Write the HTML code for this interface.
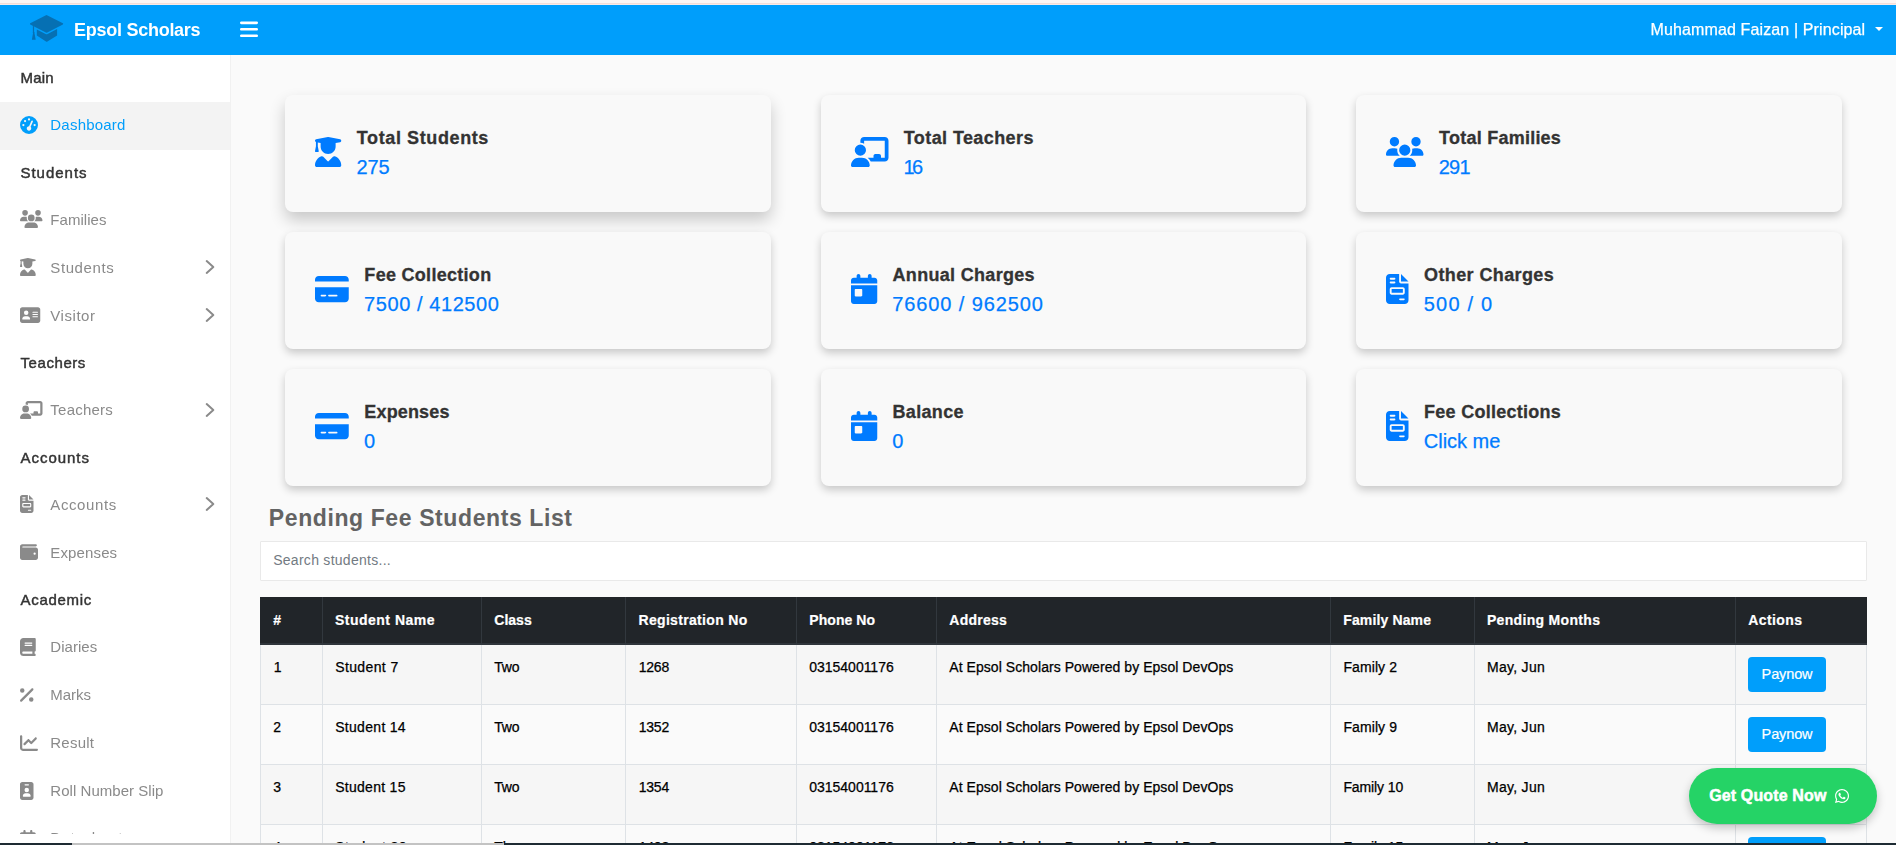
<!DOCTYPE html>
<html lang="en">
<head>
<meta charset="utf-8">
<title>Epsol Scholars - Dashboard</title>
<meta name="viewport" content="width=device-width, initial-scale=1">
<style>
*{box-sizing:border-box;margin:0;padding:0}
html,body{width:1896px;height:845px;overflow:hidden;background:#fafafa}
body{position:relative;font-family:"Liberation Sans",sans-serif;color:#333;-webkit-font-smoothing:antialiased}
.t{position:absolute;white-space:nowrap;display:block}
.i{position:absolute;display:block;overflow:visible}
.abs{position:absolute}
#topstrip{left:0;top:0;width:1896px;height:5px;background:#fdf6f4}
#topstrip i{position:absolute;left:0;width:100%;height:1px}
#header{left:0;top:5px;width:1896px;height:50px;background:#009efb}
#sidebar{left:0;top:55px;width:231px;height:788px;background:#fff;border-right:1px solid #f1f1f1}
#hdrfx{left:0;top:0;width:1896px;height:55px;will-change:transform}
#sideclip{left:0;top:55px;width:230px;height:779px;overflow:hidden;will-change:transform}
#sideclip .in{position:absolute;left:0;top:-55px;width:230px;height:900px}
.active{left:0;top:101.5px;width:230px;height:48px;background:#f3f3f3}
.card{border-radius:8px;background:#f9f9f9;box-shadow:0 4px 8px 0 rgba(0,0,0,.2);width:485.5px;height:117px}
.card.hover{box-shadow:0 8px 16px 0 rgba(0,0,0,.2)}
#search{left:260px;top:541px;width:1607px;height:40px;background:#fff;border:1px solid #e9e9e9;border-radius:1px}
#tbl{left:260px;top:597px;width:1607px;height:260px}
#thead{left:0;top:0;width:100%;height:48px;background:#212529;border-bottom:2px solid #2f353b}
.row{left:0;width:100%;height:60px;border-bottom:1px solid #dee2e6}
.row.odd{background:#f6f6f6}
.vl{top:48px;width:1px;background:#dee2e6;height:212px}
.vlh{top:0;width:1px;background:#32383e;height:48px}
.btn{width:78px;height:35px;background:#009efb;border-radius:4px}
#quote{left:1689px;top:768px;width:188px;height:56px;border-radius:28px;background:#25d366;box-shadow:0 4px 10px rgba(0,0,0,.22)}
#bottom{left:0;top:843px;width:1896px;height:2px;background:#c3c3c3}
#bottom i{position:absolute;top:0;height:2px;background:#1e2b33}
</style>
</head>
<body>

<div id="topstrip" class="abs"><i style="top:3px;background:#f5ddd7"></i><i style="top:4px;background:#f7ebe9"></i></div>
<header id="header" class="abs"></header>
<div id="hdrfx" class="abs">
<svg class="i" style="left:24px;top:8px" width="48" height="40" viewBox="24 8 48 40" aria-hidden="true"><g fill="#0670b3"><path d="M46.5 15 L62.9 23.3 Q63.5 23.9 62.9 24.4 L47.3 32.5 Q46.6 32.8 45.9 32.5 L30.2 24.4 Q29.6 23.9 30.2 23.3 Z"/><path d="M36.8 29.4 L45.6 34 Q46.6 34.5 47.6 34 L57.1 29.1 L57.1 35.6 L47.4 41.6 Q46.7 42 46 41.6 L36.8 35.6 Z"/><path d="M32.9 25.8 L34.1 26.4 L34.1 31.8 Q34.8 32.3 34.5 33.2 L35.7 39.7 L31.9 39.7 L33 33.2 Q32.5 32.3 32.9 31.8 Z"/></g></svg>
<span class="t " style="left:74.10px;top:18px;font-size:18px;line-height:24px;letter-spacing:-0.273px;color:#fff;font-weight:700;">Epsol Scholars</span>
<svg class="i" style="left:239.60px;top:19.30px;" width="18.025" height="20.6" viewBox="0 0 448 512" aria-hidden="true"><path fill="#fff" d="M0 96C0 78.3 14.3 64 32 64H416c17.700 0 32 14.300 32 32s-14.300 32-32 32H32C14.300 128 0 113.700 0 96zM0 256c0-17.700 14.300-32 32-32H416c17.700 0 32 14.300 32 32s-14.300 32-32 32H32c-17.700 0-32-14.300-32-32zM448 416c0 17.700-14.300 32-32 32H32c-17.700 0-32-14.300-32-32s14.300-32 32-32H416c17.700 0 32 14.300 32 32z"/></svg>
<span class="t " style="left:1650.50px;top:19px;font-size:16px;line-height:21px;letter-spacing:0.128px;color:#fff;-webkit-text-stroke:0.25px #fff;">Muhammad Faizan | Principal</span>
<div class="abs" style="left:1874.5px;top:27.3px;width:0;height:0;border-left:4px solid transparent;border-right:4px solid transparent;border-top:4px solid #fff"></div>
</div>
<aside id="sidebar" class="abs"></aside>
<nav id="sideclip" class="abs"><div class="in">
<div class="abs active"></div>
<span class="t " style="left:20.50px;top:67px;font-size:15px;line-height:21px;letter-spacing:0.217px;color:#333;-webkit-text-stroke:0.45px #333;">Main</span>
<svg class="i" style="left:20.00px;top:116.00px;" width="18.000" height="18" viewBox="0 0 512 512" aria-hidden="true"><path fill="#009efb" d="M0 256a256 256 0 1 1 512 0A256 256 0 1 1 0 256zM288 96a32 32 0 1 0 -64 0 32 32 0 1 0 64 0zM256 416c35.300 0 64-28.700 64-64c0-17.400-6.900-33.100-18.100-44.600L366 161.700c5.300-12.100-.2-26.300-12.300-31.600s-26.300 .2-31.600 12.300L257.900 288c-.6 0-1.300 0-1.900 0c-35.300 0-64 28.700-64 64s28.700 64 64 64zM176 144a32 32 0 1 0 -64 0 32 32 0 1 0 64 0zM96 288a32 32 0 1 0 0-64 32 32 0 1 0 0 64zm352-32a32 32 0 1 0 -64 0 32 32 0 1 0 64 0z"/></svg>
<span class="t " style="left:50.30px;top:114px;font-size:15px;line-height:21px;letter-spacing:0.219px;color:#009efb;">Dashboard</span>
<span class="t " style="left:20.50px;top:162px;font-size:15px;line-height:21px;letter-spacing:0.975px;color:#333;-webkit-text-stroke:0.45px #333;">Students</span>
<svg class="i" style="left:20.00px;top:210.00px;" width="22.500" height="18" viewBox="0 0 640 512" aria-hidden="true"><path fill="#8a8a8a" d="M144 0a80 80 0 1 1 0 160A80 80 0 1 1 144 0zM512 0a80 80 0 1 1 0 160A80 80 0 1 1 512 0zM0 298.700C0 239.800 47.800 192 106.700 192h42.700c15.900 0 31 3.500 44.600 9.700c-1.300 7.200-1.900 14.700-1.900 22.300c0 38.200 16.800 72.500 43.300 96c-.2 0-.4 0-.7 0H21.300C9.600 320 0 310.400 0 298.700zM405.300 320c-.2 0-.4 0-.7 0c26.600-23.500 43.300-57.800 43.300-96c0-7.600-.7-15-1.900-22.300c13.600-6.300 28.700-9.700 44.600-9.700h42.700C592.200 192 640 239.800 640 298.700c0 11.800-9.600 21.300-21.300 21.300H405.300zM224 224a96 96 0 1 1 192 0 96 96 0 1 1 -192 0zM128 485.300C128 411.700 187.700 352 261.300 352H378.700C452.300 352 512 411.700 512 485.300c0 14.700-11.900 26.700-26.700 26.700H154.700c-14.700 0-26.700-11.900-26.700-26.700z"/></svg>
<span class="t " style="left:50.30px;top:209px;font-size:15px;line-height:21px;letter-spacing:0.046px;color:#8a8a8a;">Families</span>
<svg class="i" style="left:20.00px;top:258.00px;" width="15.750" height="18" viewBox="0 0 448 512" aria-hidden="true"><path fill="#8a8a8a" d="M219.300 .5c3.100-.6 6.300-.6 9.400 0l200 40C439.900 42.700 448 52.600 448 64s-8.100 21.300-19.300 23.500L352 102.900V160c0 70.700-57.300 128-128 128s-128-57.300-128-128V102.900L48 93.300v65.100l15.700 78.400c.9 4.700-.3 9.600-3.300 13.300s-7.600 5.900-12.400 5.900H16c-4.800 0-9.300-2.100-12.400-5.900s-4.300-8.600-3.300-13.300L16 158.400V86.600C6.500 83.300 0 74.300 0 64C0 52.600 8.100 42.700 19.300 40.500l200-40zM111.900 327.700c10.500-3.400 21.800 .4 29.400 8.500l71 75.500c6.300 6.700 17 6.700 23.300 0l71-75.500c7.600-8.100 18.900-11.900 29.400-8.500C401 348.600 448 409.400 448 481.300c0 17-13.800 30.700-30.700 30.700H30.700C13.800 512 0 498.200 0 481.300c0-71.900 47-132.700 111.900-153.600z"/></svg>
<span class="t " style="left:50.30px;top:257px;font-size:15px;line-height:21px;letter-spacing:0.604px;color:#8a8a8a;">Students</span>
<svg class="i" style="left:203px;top:257.30px" width="14" height="20" viewBox="0 0 14 20" aria-hidden="true"><path d="M3.7 4.1 L10.3 10 L3.7 15.9" fill="none" stroke="#8a8a8a" stroke-width="2" stroke-linecap="round" stroke-linejoin="round"/></svg>
<svg class="i" style="left:20.00px;top:306.00px;" width="20.250" height="18" viewBox="0 0 576 512" aria-hidden="true"><path fill="#8a8a8a" d="M64 32C28.700 32 0 60.700 0 96V416c0 35.300 28.700 64 64 64H512c35.300 0 64-28.700 64-64V96c0-35.300-28.700-64-64-64H64zm80 256h64c44.200 0 80 35.800 80 80c0 8.800-7.200 16-16 16H80c-8.800 0-16-7.200-16-16c0-44.200 35.800-80 80-80zm-32-96a64 64 0 1 1 128 0 64 64 0 1 1 -128 0zm256-32H496c8.800 0 16 7.200 16 16s-7.200 16-16 16H368c-8.800 0-16-7.200-16-16s7.200-16 16-16zm0 64H496c8.800 0 16 7.200 16 16s-7.200 16-16 16H368c-8.800 0-16-7.200-16-16s7.200-16 16-16zm0 64H496c8.800 0 16 7.200 16 16s-7.200 16-16 16H368c-8.800 0-16-7.200-16-16s7.200-16 16-16z"/></svg>
<span class="t " style="left:50.30px;top:305px;font-size:15px;line-height:21px;letter-spacing:0.550px;color:#8a8a8a;">Visitor</span>
<svg class="i" style="left:203px;top:305.30px" width="14" height="20" viewBox="0 0 14 20" aria-hidden="true"><path d="M3.7 4.1 L10.3 10 L3.7 15.9" fill="none" stroke="#8a8a8a" stroke-width="2" stroke-linecap="round" stroke-linejoin="round"/></svg>
<span class="t " style="left:20.50px;top:352px;font-size:15px;line-height:21px;letter-spacing:0.571px;color:#333;-webkit-text-stroke:0.45px #333;">Teachers</span>
<svg class="i" style="left:20.00px;top:401.00px;" width="22.500" height="18" viewBox="0 0 640 512" aria-hidden="true"><path fill="#8a8a8a" d="M160 64c0-35.300 28.700-64 64-64H576c35.300 0 64 28.700 64 64V352c0 35.300-28.700 64-64 64H336.800c-11.800-25.500-29.900-47.500-52.400-64H384V320c0-17.700 14.300-32 32-32h64c17.700 0 32 14.300 32 32v32h64V64L224 64v49.100C205.200 102.200 183.300 96 160 96V64zm0 64a96 96 0 1 1 0 192 96 96 0 1 1 0-192zM133.300 352h53.300C260.300 352 320 411.700 320 485.300c0 14.700-11.900 26.700-26.700 26.700H26.700C11.900 512 0 500.100 0 485.300C0 411.700 59.700 352 133.300 352z"/></svg>
<span class="t " style="left:50.30px;top:399px;font-size:15px;line-height:21px;letter-spacing:0.243px;color:#8a8a8a;">Teachers</span>
<svg class="i" style="left:203px;top:399.80px" width="14" height="20" viewBox="0 0 14 20" aria-hidden="true"><path d="M3.7 4.1 L10.3 10 L3.7 15.9" fill="none" stroke="#8a8a8a" stroke-width="2" stroke-linecap="round" stroke-linejoin="round"/></svg>
<span class="t " style="left:20.50px;top:447px;font-size:15px;line-height:21px;letter-spacing:0.968px;color:#333;-webkit-text-stroke:0.45px #333;">Accounts</span>
<svg class="i" style="left:20.00px;top:495.00px;" width="13.500" height="18" viewBox="0 0 384 512" aria-hidden="true"><path fill="#8a8a8a" d="M64 0C28.700 0 0 28.700 0 64V448c0 35.300 28.700 64 64 64H320c35.300 0 64-28.700 64-64V160H256c-17.700 0-32-14.300-32-32V0H64zM256 0V128H384L256 0zM80 64h64c8.800 0 16 7.200 16 16s-7.200 16-16 16H80c-8.800 0-16-7.200-16-16s7.200-16 16-16zm0 64h64c8.800 0 16 7.200 16 16s-7.200 16-16 16H80c-8.800 0-16-7.200-16-16s7.200-16 16-16zm16 96H288c17.700 0 32 14.300 32 32v64c0 17.700-14.300 32-32 32H96c-17.700 0-32-14.300-32-32V256c0-17.700 14.300-32 32-32zm0 32v64H288V256H96zM240 416h64c8.800 0 16 7.200 16 16s-7.200 16-16 16H240c-8.800 0-16-7.200-16-16s7.200-16 16-16z"/></svg>
<span class="t " style="left:50.30px;top:494px;font-size:15px;line-height:21px;letter-spacing:0.596px;color:#8a8a8a;">Accounts</span>
<svg class="i" style="left:203px;top:494.30px" width="14" height="20" viewBox="0 0 14 20" aria-hidden="true"><path d="M3.7 4.1 L10.3 10 L3.7 15.9" fill="none" stroke="#8a8a8a" stroke-width="2" stroke-linecap="round" stroke-linejoin="round"/></svg>
<svg class="i" style="left:20.00px;top:543.00px;" width="18.000" height="18" viewBox="0 0 512 512" aria-hidden="true"><path fill="#8a8a8a" d="M64 32C28.700 32 0 60.700 0 96V416c0 35.300 28.700 64 64 64H448c35.300 0 64-28.700 64-64V192c0-35.300-28.700-64-64-64H80c-8.800 0-16-7.200-16-16s7.200-16 16-16H448c17.700 0 32-14.300 32-32s-14.300-32-32-32H64zM416 272a32 32 0 1 1 0 64 32 32 0 1 1 0-64z"/></svg>
<span class="t " style="left:50.30px;top:542px;font-size:15px;line-height:21px;letter-spacing:0.136px;color:#8a8a8a;">Expenses</span>
<span class="t " style="left:20.50px;top:589px;font-size:15px;line-height:21px;letter-spacing:0.693px;color:#333;-webkit-text-stroke:0.45px #333;">Academic</span>
<svg class="i" style="left:20.00px;top:638.00px;" width="15.750" height="18" viewBox="0 0 448 512" aria-hidden="true"><path fill="#8a8a8a" d="M96 0C43 0 0 43 0 96V416c0 53 43 96 96 96H384h32c17.700 0 32-14.300 32-32s-14.300-32-32-32V384c17.700 0 32-14.300 32-32V32c0-17.700-14.300-32-32-32H384 96zm0 384H352v64H96c-17.700 0-32-14.300-32-32s14.300-32 32-32zm32-240c0-8.800 7.200-16 16-16H336c8.800 0 16 7.200 16 16s-7.200 16-16 16H144c-8.800 0-16-7.200-16-16zm16 48H336c8.800 0 16 7.200 16 16s-7.200 16-16 16H144c-8.800 0-16-7.200-16-16s7.200-16 16-16z"/></svg>
<span class="t " style="left:50.30px;top:636px;font-size:15px;line-height:21px;letter-spacing:0.042px;color:#8a8a8a;">Diaries</span>
<svg class="i" style="left:20.00px;top:686.00px;" width="13.500" height="18" viewBox="0 0 384 512" aria-hidden="true"><path fill="#8a8a8a" d="M374.600 118.600c12.500-12.500 12.500-32.800 0-45.300s-32.800-12.500-45.300 0l-320 320c-12.500 12.500-12.500 32.800 0 45.300s32.800 12.500 45.300 0l320-320zM128 128A64 64 0 1 0 0 128a64 64 0 1 0 128 0zM384 384a64 64 0 1 0 -128 0 64 64 0 1 0 128 0z"/></svg>
<span class="t " style="left:50.30px;top:684px;font-size:15px;line-height:21px;letter-spacing:-0.050px;color:#8a8a8a;">Marks</span>
<svg class="i" style="left:20.00px;top:734.00px;" width="18.000" height="18" viewBox="0 0 512 512" aria-hidden="true"><path fill="#8a8a8a" d="M64 64c0-17.700-14.300-32-32-32S0 46.300 0 64V400c0 44.200 35.800 80 80 80H480c17.700 0 32-14.300 32-32s-14.300-32-32-32H80c-8.800 0-16-7.200-16-16V64zm406.600 86.600c12.500-12.500 12.500-32.800 0-45.300s-32.800-12.500-45.300 0L320 210.700l-57.400-57.400c-12.500-12.500-32.800-12.500-45.300 0l-112 112c-12.500 12.500-12.500 32.800 0 45.300s32.800 12.500 45.300 0L240 221.300l57.400 57.400c12.500 12.500 32.800 12.500 45.300 0l128-128z"/></svg>
<span class="t " style="left:50.30px;top:732px;font-size:15px;line-height:21px;letter-spacing:0.235px;color:#8a8a8a;">Result</span>
<svg class="i" style="left:20.00px;top:782.00px;" width="13.500" height="18" viewBox="0 0 384 512" aria-hidden="true"><path fill="#8a8a8a" d="M64 0C28.700 0 0 28.700 0 64V448c0 35.300 28.700 64 64 64H320c35.300 0 64-28.700 64-64V64c0-35.300-28.700-64-64-64H64zm96 320h64c44.200 0 80 35.800 80 80c0 8.800-7.200 16-16 16H96c-8.800 0-16-7.200-16-16c0-44.200 35.800-80 80-80zm-32-96a64 64 0 1 1 128 0 64 64 0 1 1 -128 0zM144 64h96c8.800 0 16 7.200 16 16s-7.200 16-16 16H144c-8.800 0-16-7.200-16-16s7.200-16 16-16z"/></svg>
<span class="t " style="left:50.30px;top:780px;font-size:15px;line-height:21px;letter-spacing:0.042px;color:#8a8a8a;">Roll Number Slip</span>
<svg class="i" style="left:20.00px;top:830.00px;" width="15.750" height="18" viewBox="0 0 448 512" aria-hidden="true"><path fill="#8a8a8a" d="M128 0c17.700 0 32 14.300 32 32V64H288V32c0-17.700 14.300-32 32-32s32 14.300 32 32V64h48c26.500 0 48 21.500 48 48v48H0V112C0 85.500 21.500 64 48 64H96V32c0-17.700 14.300-32 32-32zM0 192H448V464c0 26.500-21.500 48-48 48H48c-26.500 0-48-21.500-48-48V192zm64 80v32c0 8.800 7.200 16 16 16h32c8.800 0 16-7.200 16-16V272c0-8.800-7.200-16-16-16H80c-8.800 0-16 7.200-16 16zm128 0v32c0 8.800 7.200 16 16 16h32c8.800 0 16-7.200 16-16V272c0-8.800-7.200-16-16-16H208c-8.800 0-16 7.200-16 16zm144-16c-8.800 0-16 7.200-16 16v32c0 8.800 7.200 16 16 16h32c8.800 0 16-7.200 16-16V272c0-8.800-7.200-16-16-16H336z"/></svg>
<span class="t " style="left:50.30px;top:827px;font-size:15px;line-height:21px;letter-spacing:0.475px;color:#8a8a8a;">Datesheet</span>
</div></nav>
<main>
<section class="abs card hover" style="left:285.00px;top:95px"></section>
<svg class="i" style="left:315.00px;top:136.80px;" width="26.250" height="30" viewBox="0 0 448 512" aria-hidden="true"><path fill="#007bff" d="M219.300 .5c3.100-.6 6.300-.6 9.400 0l200 40C439.900 42.700 448 52.600 448 64s-8.100 21.300-19.300 23.500L352 102.900V160c0 70.700-57.300 128-128 128s-128-57.300-128-128V102.900L48 93.300v65.100l15.700 78.400c.9 4.700-.3 9.600-3.300 13.300s-7.600 5.900-12.400 5.900H16c-4.800 0-9.300-2.100-12.400-5.900s-4.300-8.600-3.300-13.300L16 158.400V86.600C6.500 83.300 0 74.300 0 64C0 52.600 8.100 42.700 19.300 40.500l200-40zM111.900 327.700c10.500-3.400 21.800 .4 29.400 8.500l71 75.500c6.300 6.700 17 6.700 23.300 0l71-75.500c7.600-8.100 18.900-11.900 29.400-8.500C401 348.600 448 409.400 448 481.300c0 17-13.800 30.700-30.700 30.700H30.700C13.800 512 0 498.200 0 481.300c0-71.900 47-132.700 111.900-153.600z"/></svg>
<span class="t " style="left:356.85px;top:126px;font-size:18px;line-height:24px;letter-spacing:0.603px;color:#333;font-weight:700;-webkit-text-stroke:0.3px #333;">Total Students</span>
<span class="t " style="left:356.55px;top:154px;font-size:20px;line-height:26px;letter-spacing:-0.200px;color:#007bff;-webkit-text-stroke:0.25px #007bff;">275</span>
<section class="abs card" style="left:820.67px;top:95px"></section>
<svg class="i" style="left:850.67px;top:136.80px;" width="37.500" height="30" viewBox="0 0 640 512" aria-hidden="true"><path fill="#007bff" d="M160 64c0-35.300 28.700-64 64-64H576c35.300 0 64 28.700 64 64V352c0 35.300-28.700 64-64 64H336.800c-11.800-25.500-29.900-47.500-52.400-64H384V320c0-17.700 14.300-32 32-32h64c17.700 0 32 14.300 32 32v32h64V64L224 64v49.100C205.200 102.200 183.300 96 160 96V64zm0 64a96 96 0 1 1 0 192 96 96 0 1 1 0-192zM133.300 352h53.300C260.300 352 320 411.700 320 485.300c0 14.700-11.900 26.700-26.700 26.700H26.700C11.900 512 0 500.100 0 485.300C0 411.700 59.700 352 133.300 352z"/></svg>
<span class="t " style="left:903.77px;top:126px;font-size:18px;line-height:24px;letter-spacing:0.409px;color:#333;font-weight:700;-webkit-text-stroke:0.3px #333;">Total Teachers</span>
<span class="t " style="left:903.47px;top:154px;font-size:20px;line-height:26px;letter-spacing:-2.700px;color:#007bff;-webkit-text-stroke:0.25px #007bff;">16</span>
<section class="abs card" style="left:1356.00px;top:95px"></section>
<svg class="i" style="left:1386.00px;top:136.80px;" width="37.500" height="30" viewBox="0 0 640 512" aria-hidden="true"><path fill="#007bff" d="M144 0a80 80 0 1 1 0 160A80 80 0 1 1 144 0zM512 0a80 80 0 1 1 0 160A80 80 0 1 1 512 0zM0 298.700C0 239.800 47.800 192 106.700 192h42.700c15.900 0 31 3.500 44.600 9.700c-1.300 7.200-1.900 14.700-1.900 22.300c0 38.200 16.800 72.500 43.300 96c-.2 0-.4 0-.7 0H21.300C9.600 320 0 310.400 0 298.700zM405.300 320c-.2 0-.4 0-.7 0c26.600-23.500 43.300-57.800 43.300-96c0-7.600-.7-15-1.900-22.300c13.600-6.300 28.700-9.700 44.600-9.700h42.700C592.200 192 640 239.800 640 298.700c0 11.800-9.600 21.300-21.300 21.300H405.300zM224 224a96 96 0 1 1 192 0 96 96 0 1 1 -192 0zM128 485.300C128 411.700 187.700 352 261.300 352H378.700C452.300 352 512 411.700 512 485.300c0 14.700-11.900 26.700-26.700 26.700H154.700c-14.700 0-26.700-11.900-26.700-26.700z"/></svg>
<span class="t " style="left:1439.10px;top:126px;font-size:18px;line-height:24px;letter-spacing:0.238px;color:#333;font-weight:700;-webkit-text-stroke:0.3px #333;">Total Families</span>
<span class="t " style="left:1438.80px;top:154px;font-size:20px;line-height:26px;letter-spacing:-0.800px;color:#007bff;-webkit-text-stroke:0.25px #007bff;">291</span>
<section class="abs card" style="left:285.00px;top:232px"></section>
<svg class="i" style="left:315.00px;top:273.80px;" width="33.750" height="30" viewBox="0 0 576 512" aria-hidden="true"><path fill="#007bff" d="M64 32C28.700 32 0 60.700 0 96v32H576V96c0-35.300-28.700-64-64-64H64zM576 224H0V416c0 35.300 28.700 64 64 64H512c35.300 0 64-28.700 64-64V224zM112 352h64c8.800 0 16 7.200 16 16s-7.200 16-16 16H112c-8.800 0-16-7.200-16-16s7.200-16 16-16zm112 16c0-8.800 7.200-16 16-16H368c8.800 0 16 7.200 16 16s-7.200 16-16 16H240c-8.800 0-16-7.200-16-16z"/></svg>
<span class="t " style="left:364.35px;top:263px;font-size:18px;line-height:24px;letter-spacing:0.290px;color:#333;font-weight:700;-webkit-text-stroke:0.3px #333;">Fee Collection</span>
<span class="t " style="left:364.05px;top:291px;font-size:20px;line-height:26px;letter-spacing:0.575px;color:#007bff;-webkit-text-stroke:0.25px #007bff;">7500 / 412500</span>
<section class="abs card" style="left:820.67px;top:232px"></section>
<svg class="i" style="left:850.67px;top:273.80px;" width="26.250" height="30" viewBox="0 0 448 512" aria-hidden="true"><path fill="#007bff" d="M128 0c17.700 0 32 14.300 32 32V64H288V32c0-17.700 14.300-32 32-32s32 14.300 32 32V64h48c26.500 0 48 21.500 48 48v48H0V112C0 85.500 21.500 64 48 64H96V32c0-17.700 14.300-32 32-32zM0 192H448V464c0 26.500-21.500 48-48 48H48c-26.500 0-48-21.500-48-48V192zm80 64c-8.800 0-16 7.200-16 16v96c0 8.800 7.200 16 16 16h96c8.800 0 16-7.200 16-16V272c0-8.800-7.200-16-16-16H80z"/></svg>
<span class="t " style="left:892.52px;top:263px;font-size:18px;line-height:24px;letter-spacing:0.311px;color:#333;font-weight:700;-webkit-text-stroke:0.3px #333;">Annual Charges</span>
<span class="t " style="left:892.22px;top:291px;font-size:20px;line-height:26px;letter-spacing:0.900px;color:#007bff;-webkit-text-stroke:0.25px #007bff;">76600 / 962500</span>
<section class="abs card" style="left:1356.00px;top:232px"></section>
<svg class="i" style="left:1386.00px;top:273.80px;" width="22.500" height="30" viewBox="0 0 384 512" aria-hidden="true"><path fill="#007bff" d="M64 0C28.700 0 0 28.700 0 64V448c0 35.300 28.700 64 64 64H320c35.300 0 64-28.700 64-64V160H256c-17.700 0-32-14.300-32-32V0H64zM256 0V128H384L256 0zM80 64h64c8.800 0 16 7.200 16 16s-7.200 16-16 16H80c-8.800 0-16-7.200-16-16s7.200-16 16-16zm0 64h64c8.800 0 16 7.200 16 16s-7.200 16-16 16H80c-8.800 0-16-7.200-16-16s7.200-16 16-16zm16 96H288c17.700 0 32 14.300 32 32v64c0 17.700-14.300 32-32 32H96c-17.700 0-32-14.300-32-32V256c0-17.700 14.300-32 32-32zm0 32v64H288V256H96zM240 416h64c8.800 0 16 7.200 16 16s-7.200 16-16 16H240c-8.800 0-16-7.200-16-16s7.200-16 16-16z"/></svg>
<span class="t " style="left:1424.10px;top:263px;font-size:18px;line-height:24px;letter-spacing:0.382px;color:#333;font-weight:700;-webkit-text-stroke:0.3px #333;">Other Charges</span>
<span class="t " style="left:1423.80px;top:291px;font-size:20px;line-height:26px;letter-spacing:1.200px;color:#007bff;-webkit-text-stroke:0.25px #007bff;">500 / 0</span>
<section class="abs card" style="left:285.00px;top:369px"></section>
<svg class="i" style="left:315.00px;top:410.80px;" width="33.750" height="30" viewBox="0 0 576 512" aria-hidden="true"><path fill="#007bff" d="M64 32C28.700 32 0 60.700 0 96v32H576V96c0-35.300-28.700-64-64-64H64zM576 224H0V416c0 35.300 28.700 64 64 64H512c35.300 0 64-28.700 64-64V224zM112 352h64c8.800 0 16 7.200 16 16s-7.200 16-16 16H112c-8.800 0-16-7.200-16-16s7.200-16 16-16zm112 16c0-8.800 7.200-16 16-16H368c8.800 0 16 7.200 16 16s-7.200 16-16 16H240c-8.800 0-16-7.200-16-16z"/></svg>
<span class="t " style="left:364.35px;top:400px;font-size:18px;line-height:24px;letter-spacing:0.149px;color:#333;font-weight:700;-webkit-text-stroke:0.3px #333;">Expenses</span>
<span class="t " style="left:364.05px;top:428px;font-size:20px;line-height:26px;letter-spacing:0.000px;color:#007bff;-webkit-text-stroke:0.25px #007bff;">0</span>
<section class="abs card" style="left:820.67px;top:369px"></section>
<svg class="i" style="left:850.67px;top:410.80px;" width="26.250" height="30" viewBox="0 0 448 512" aria-hidden="true"><path fill="#007bff" d="M128 0c17.700 0 32 14.300 32 32V64H288V32c0-17.700 14.300-32 32-32s32 14.300 32 32V64h48c26.500 0 48 21.500 48 48v48H0V112C0 85.500 21.500 64 48 64H96V32c0-17.700 14.300-32 32-32zM0 192H448V464c0 26.500-21.500 48-48 48H48c-26.500 0-48-21.500-48-48V192zm80 64c-8.800 0-16 7.200-16 16v96c0 8.800 7.200 16 16 16h96c8.800 0 16-7.200 16-16V272c0-8.800-7.200-16-16-16H80z"/></svg>
<span class="t " style="left:892.52px;top:400px;font-size:18px;line-height:24px;letter-spacing:0.328px;color:#333;font-weight:700;-webkit-text-stroke:0.3px #333;">Balance</span>
<span class="t " style="left:892.22px;top:428px;font-size:20px;line-height:26px;letter-spacing:0.000px;color:#007bff;-webkit-text-stroke:0.25px #007bff;">0</span>
<section class="abs card" style="left:1356.00px;top:369px"></section>
<svg class="i" style="left:1386.00px;top:410.80px;" width="22.500" height="30" viewBox="0 0 384 512" aria-hidden="true"><path fill="#007bff" d="M64 0C28.700 0 0 28.700 0 64V448c0 35.300 28.700 64 64 64H320c35.300 0 64-28.700 64-64V160H256c-17.700 0-32-14.300-32-32V0H64zM256 0V128H384L256 0zM80 64h64c8.800 0 16 7.200 16 16s-7.200 16-16 16H80c-8.800 0-16-7.200-16-16s7.200-16 16-16zm0 64h64c8.800 0 16 7.200 16 16s-7.200 16-16 16H80c-8.800 0-16-7.200-16-16s7.200-16 16-16zm16 96H288c17.700 0 32 14.300 32 32v64c0 17.700-14.300 32-32 32H96c-17.700 0-32-14.300-32-32V256c0-17.700 14.300-32 32-32zm0 32v64H288V256H96zM240 416h64c8.800 0 16 7.200 16 16s-7.200 16-16 16H240c-8.800 0-16-7.200-16-16s7.200-16 16-16z"/></svg>
<span class="t " style="left:1424.10px;top:400px;font-size:18px;line-height:24px;letter-spacing:0.256px;color:#333;font-weight:700;-webkit-text-stroke:0.3px #333;">Fee Collections</span>
<span class="t " style="left:1423.80px;top:428px;font-size:20px;line-height:26px;letter-spacing:-0.029px;color:#007bff;-webkit-text-stroke:0.25px #007bff;">Click me</span>
<span class="t " style="left:268.80px;top:503px;font-size:23px;line-height:30px;letter-spacing:0.601px;color:#636363;font-weight:700;">Pending Fee Students List</span>
<div id="search" class="abs"></div>
<span class="t " style="left:273.20px;top:550px;font-size:14px;line-height:20px;letter-spacing:0.274px;color:#727a82;">Search students...</span>
<div id="tbl" class="abs">
<div id="thead" class="abs"></div>
<div class="abs row odd" style="top:48px"></div>
<div class="abs row " style="top:108px"></div>
<div class="abs row odd" style="top:168px"></div>
<div class="abs row " style="top:228px"></div>
<div class="abs vl" style="left:0.0px"></div>
<div class="abs vl" style="left:62.0px"></div>
<div class="abs vl" style="left:221.0px"></div>
<div class="abs vl" style="left:365.0px"></div>
<div class="abs vl" style="left:536.0px"></div>
<div class="abs vl" style="left:676.0px"></div>
<div class="abs vl" style="left:1070.0px"></div>
<div class="abs vl" style="left:1214.0px"></div>
<div class="abs vl" style="left:1475.0px"></div>
<div class="abs vl" style="left:1606.0px"></div>
<div class="abs vlh" style="left:62.0px"></div>
<div class="abs vlh" style="left:221.0px"></div>
<div class="abs vlh" style="left:365.0px"></div>
<div class="abs vlh" style="left:536.0px"></div>
<div class="abs vlh" style="left:676.0px"></div>
<div class="abs vlh" style="left:1070.0px"></div>
<div class="abs vlh" style="left:1214.0px"></div>
<div class="abs vlh" style="left:1475.0px"></div>
</div>
<span class="t " style="left:273.30px;top:610px;font-size:14px;line-height:20px;letter-spacing:0.000px;color:#fff;font-weight:700;-webkit-text-stroke:0.2px #fff;">#</span>
<span class="t " style="left:335.00px;top:610px;font-size:14px;line-height:20px;letter-spacing:0.486px;color:#fff;font-weight:700;-webkit-text-stroke:0.2px #fff;">Student Name</span>
<span class="t " style="left:494.30px;top:610px;font-size:14px;line-height:20px;letter-spacing:0.005px;color:#fff;font-weight:700;-webkit-text-stroke:0.2px #fff;">Class</span>
<span class="t " style="left:638.50px;top:610px;font-size:14px;line-height:20px;letter-spacing:0.319px;color:#fff;font-weight:700;-webkit-text-stroke:0.2px #fff;">Registration No</span>
<span class="t " style="left:809.30px;top:610px;font-size:14px;line-height:20px;letter-spacing:0.056px;color:#fff;font-weight:700;-webkit-text-stroke:0.2px #fff;">Phone No</span>
<span class="t " style="left:949.30px;top:610px;font-size:14px;line-height:20px;letter-spacing:0.233px;color:#fff;font-weight:700;-webkit-text-stroke:0.2px #fff;">Address</span>
<span class="t " style="left:1343.20px;top:610px;font-size:14px;line-height:20px;letter-spacing:0.142px;color:#fff;font-weight:700;-webkit-text-stroke:0.2px #fff;">Family Name</span>
<span class="t " style="left:1486.90px;top:610px;font-size:14px;line-height:20px;letter-spacing:0.327px;color:#fff;font-weight:700;-webkit-text-stroke:0.2px #fff;">Pending Months</span>
<span class="t " style="left:1748.20px;top:610px;font-size:14px;line-height:20px;letter-spacing:0.415px;color:#fff;font-weight:700;-webkit-text-stroke:0.2px #fff;">Actions</span>
<span class="t " style="left:273.80px;top:657px;font-size:14px;line-height:20px;letter-spacing:0.000px;color:#000;-webkit-text-stroke:0.25px #000;">1</span>
<span class="t " style="left:335.20px;top:657px;font-size:14px;line-height:20px;letter-spacing:0.385px;color:#000;-webkit-text-stroke:0.25px #000;">Student 7</span>
<span class="t " style="left:494.30px;top:657px;font-size:14px;line-height:20px;letter-spacing:-0.245px;color:#000;-webkit-text-stroke:0.25px #000;">Two</span>
<span class="t " style="left:638.80px;top:657px;font-size:14px;line-height:20px;letter-spacing:-0.250px;color:#000;-webkit-text-stroke:0.25px #000;">1268</span>
<span class="t " style="left:809.30px;top:657px;font-size:14px;line-height:20px;letter-spacing:-0.023px;color:#000;-webkit-text-stroke:0.25px #000;">03154001176</span>
<span class="t " style="left:949.30px;top:657px;font-size:14px;line-height:20px;letter-spacing:0.056px;color:#000;-webkit-text-stroke:0.25px #000;">At Epsol Scholars Powered by Epsol DevOps</span>
<span class="t " style="left:1343.40px;top:657px;font-size:14px;line-height:20px;letter-spacing:0.097px;color:#000;-webkit-text-stroke:0.25px #000;">Family 2</span>
<span class="t " style="left:1487.00px;top:657px;font-size:14px;line-height:20px;letter-spacing:0.287px;color:#000;-webkit-text-stroke:0.25px #000;">May, Jun</span>
<div class="abs btn" style="left:1748px;top:657px"></div>
<span class="t " style="left:1761.60px;top:664px;font-size:14.5px;line-height:20px;letter-spacing:-0.124px;color:#fff;-webkit-text-stroke:0.2px #fff;">Paynow</span>
<span class="t " style="left:273.30px;top:717px;font-size:14px;line-height:20px;letter-spacing:0.000px;color:#000;-webkit-text-stroke:0.25px #000;">2</span>
<span class="t " style="left:335.20px;top:717px;font-size:14px;line-height:20px;letter-spacing:0.304px;color:#000;-webkit-text-stroke:0.25px #000;">Student 14</span>
<span class="t " style="left:494.30px;top:717px;font-size:14px;line-height:20px;letter-spacing:-0.245px;color:#000;-webkit-text-stroke:0.25px #000;">Two</span>
<span class="t " style="left:638.80px;top:717px;font-size:14px;line-height:20px;letter-spacing:-0.250px;color:#000;-webkit-text-stroke:0.25px #000;">1352</span>
<span class="t " style="left:809.30px;top:717px;font-size:14px;line-height:20px;letter-spacing:-0.023px;color:#000;-webkit-text-stroke:0.25px #000;">03154001176</span>
<span class="t " style="left:949.30px;top:717px;font-size:14px;line-height:20px;letter-spacing:0.056px;color:#000;-webkit-text-stroke:0.25px #000;">At Epsol Scholars Powered by Epsol DevOps</span>
<span class="t " style="left:1343.40px;top:717px;font-size:14px;line-height:20px;letter-spacing:0.097px;color:#000;-webkit-text-stroke:0.25px #000;">Family 9</span>
<span class="t " style="left:1487.00px;top:717px;font-size:14px;line-height:20px;letter-spacing:0.287px;color:#000;-webkit-text-stroke:0.25px #000;">May, Jun</span>
<div class="abs btn" style="left:1748px;top:717px"></div>
<span class="t " style="left:1761.60px;top:724px;font-size:14.5px;line-height:20px;letter-spacing:-0.124px;color:#fff;-webkit-text-stroke:0.2px #fff;">Paynow</span>
<span class="t " style="left:273.30px;top:777px;font-size:14px;line-height:20px;letter-spacing:0.000px;color:#000;-webkit-text-stroke:0.25px #000;">3</span>
<span class="t " style="left:335.20px;top:777px;font-size:14px;line-height:20px;letter-spacing:0.282px;color:#000;-webkit-text-stroke:0.25px #000;">Student 15</span>
<span class="t " style="left:494.30px;top:777px;font-size:14px;line-height:20px;letter-spacing:-0.245px;color:#000;-webkit-text-stroke:0.25px #000;">Two</span>
<span class="t " style="left:638.80px;top:777px;font-size:14px;line-height:20px;letter-spacing:-0.250px;color:#000;-webkit-text-stroke:0.25px #000;">1354</span>
<span class="t " style="left:809.30px;top:777px;font-size:14px;line-height:20px;letter-spacing:-0.023px;color:#000;-webkit-text-stroke:0.25px #000;">03154001176</span>
<span class="t " style="left:949.30px;top:777px;font-size:14px;line-height:20px;letter-spacing:0.056px;color:#000;-webkit-text-stroke:0.25px #000;">At Epsol Scholars Powered by Epsol DevOps</span>
<span class="t " style="left:1343.40px;top:777px;font-size:14px;line-height:20px;letter-spacing:-0.111px;color:#000;-webkit-text-stroke:0.25px #000;">Family 10</span>
<span class="t " style="left:1487.00px;top:777px;font-size:14px;line-height:20px;letter-spacing:0.287px;color:#000;-webkit-text-stroke:0.25px #000;">May, Jun</span>
<div class="abs btn" style="left:1748px;top:777px"></div>
<span class="t " style="left:1761.60px;top:784px;font-size:14.5px;line-height:20px;letter-spacing:-0.124px;color:#fff;-webkit-text-stroke:0.2px #fff;">Paynow</span>
<span class="t " style="left:273.30px;top:837px;font-size:14px;line-height:20px;letter-spacing:0.000px;color:#000;-webkit-text-stroke:0.25px #000;">4</span>
<span class="t " style="left:335.20px;top:837px;font-size:14px;line-height:20px;letter-spacing:0.393px;color:#000;-webkit-text-stroke:0.25px #000;">Student 20</span>
<span class="t " style="left:494.30px;top:837px;font-size:14px;line-height:20px;letter-spacing:-0.210px;color:#000;-webkit-text-stroke:0.25px #000;">Three</span>
<span class="t " style="left:638.80px;top:837px;font-size:14px;line-height:20px;letter-spacing:-0.250px;color:#000;-webkit-text-stroke:0.25px #000;">1402</span>
<span class="t " style="left:809.30px;top:837px;font-size:14px;line-height:20px;letter-spacing:-0.023px;color:#000;-webkit-text-stroke:0.25px #000;">03154001176</span>
<span class="t " style="left:949.30px;top:837px;font-size:14px;line-height:20px;letter-spacing:0.056px;color:#000;-webkit-text-stroke:0.25px #000;">At Epsol Scholars Powered by Epsol DevOps</span>
<span class="t " style="left:1343.40px;top:837px;font-size:14px;line-height:20px;letter-spacing:-0.111px;color:#000;-webkit-text-stroke:0.25px #000;">Family 15</span>
<span class="t " style="left:1487.00px;top:837px;font-size:14px;line-height:20px;letter-spacing:0.287px;color:#000;-webkit-text-stroke:0.25px #000;">May, Jun</span>
<div class="abs btn" style="left:1748px;top:837px"></div>
<span class="t " style="left:1761.60px;top:844px;font-size:14.5px;line-height:20px;letter-spacing:-0.124px;color:#fff;-webkit-text-stroke:0.2px #fff;">Paynow</span>
</main>
<div id="quote" class="abs"></div>
<span class="t " style="left:1709.20px;top:785px;font-size:16px;line-height:21px;letter-spacing:0.133px;color:#fff;font-weight:700;-webkit-text-stroke:0.5px #fff;">Get Quote Now</span>
<svg class="i" style="left:1834.90px;top:788.00px;" width="14.000" height="16" viewBox="0 0 448 512" aria-hidden="true"><path fill="#fff" d="M380.900 97.100C339 55.100 283.200 32 223.900 32c-122.400 0-222 99.600-222 222 0 39.100 10.200 77.300 29.600 111L0 480l117.700-30.900c32.400 17.700 68.900 27 106.100 27h.1c122.300 0 224.100-99.600 224.100-222 0-59.300-25.200-115-67.100-157zm-157 341.600c-33.200 0-65.700-8.900-94-25.700l-6.700-4-69.800 18.300L72 359.200l-4.400-7c-18.500-29.400-28.200-63.300-28.200-98.200 0-101.700 82.800-184.500 184.600-184.500 49.300 0 95.600 19.200 130.400 54.100 34.800 34.900 56.200 81.200 56.100 130.500 0 101.800-84.900 184.600-186.600 184.600zm101.200-138.200c-5.500-2.800-32.800-16.200-37.900-18-5.100-1.900-8.800-2.800-12.500 2.800-3.700 5.600-14.300 18-17.600 21.800-3.200 3.700-6.500 4.200-12 1.400-32.600-16.300-54-29.100-75.500-66-5.700-9.800 5.700-9.100 16.300-30.300 1.800-3.700.9-6.900-.5-9.700-1.400-2.800-12.500-30.100-17.100-41.200-4.500-10.800-9.100-9.300-12.500-9.500-3.200-.2-6.900-.2-10.600-.2-3.700 0-9.700 1.400-14.800 6.900-5.100 5.600-19.400 19-19.400 46.300 0 27.300 19.900 53.700 22.600 57.400 2.800 3.700 39.100 59.700 94.800 83.800 35.200 15.200 49 16.500 66.600 13.900 10.700-1.600 32.800-13.400 37.400-26.400 4.600-13 4.600-24.100 3.200-26.400-1.300-2.500-5-3.900-10.500-6.600z"/></svg>
<div id="bottom" class="abs"><i style="left:0;width:72px"></i><i style="left:504px;width:1392px"></i></div>
</body>
</html>
